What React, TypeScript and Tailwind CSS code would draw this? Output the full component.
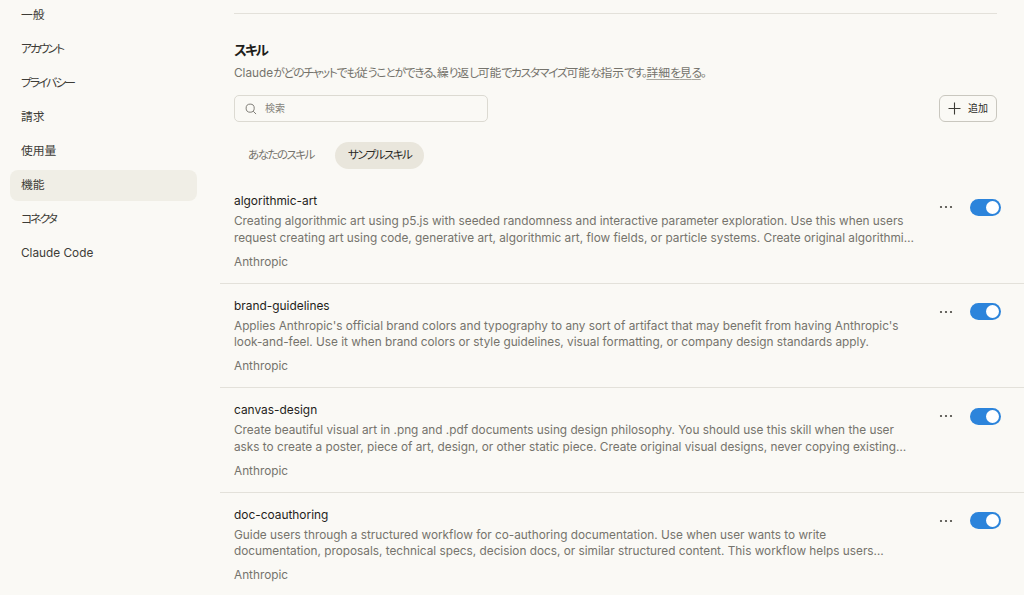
import React from "react";

const nav = ["一般", "アカウント", "プライバシー", "請求", "使用量", "機能", "コネクタ", "Claude Code"];

const skills = [
  {
    name: "algorithmic-art",
    lines: [
      "Creating algorithmic art using p5.js with seeded randomness and interactive parameter exploration. Use this when users",
      "request creating art using code, generative art, algorithmic art, flow fields, or particle systems. Create original algorithmi…",
    ],
  },
  {
    name: "brand-guidelines",
    lines: [
      "Applies Anthropic's official brand colors and typography to any sort of artifact that may benefit from having Anthropic's",
      "look-and-feel. Use it when brand colors or style guidelines, visual formatting, or company design standards apply.",
    ],
  },
  {
    name: "canvas-design",
    lines: [
      "Create beautiful visual art in .png and .pdf documents using design philosophy. You should use this skill when the user",
      "asks to create a poster, piece of art, design, or other static piece. Create original visual designs, never copying existing…",
    ],
  },
  {
    name: "doc-coauthoring",
    lines: [
      "Guide users through a structured workflow for co-authoring documentation. Use when user wants to write",
      "documentation, proposals, technical specs, decision docs, or similar structured content. This workflow helps users…",
    ],
  },
];

const font = "font-['Inter','Noto_Sans_CJK_JP',sans-serif] [font-feature-settings:'palt']";

// The reference font has narrow kana next to full-width kanji, so kana runs are tightened.
function K({ t, track = "tracking-[-0.13em]" }: { t: string; track?: string }) {
  return (
    <>
      {t.split(/([\u3040-\u30ff、。]+)/).map((part, i) =>
        i % 2 === 1 ? (
          <span key={i} className={track}>
            {part}
          </span>
        ) : (
          part
        ),
      )}
    </>
  );
}

function Row({ s, last }: { s: (typeof skills)[number]; last: boolean }) {
  return (
    <div className={`flex h-[104.5px] shrink-0 pl-[14px] pr-[23px] pt-[13px] ${last ? "" : "border-b border-[#e3e1da]"}`}>
      <div className="w-[680px] shrink-0">
        <div className="h-[18px] text-[11.9px] leading-[18px] text-[#1f1e1b]">{s.name}</div>
        <div className="mt-[3px] whitespace-nowrap text-[11.8px] leading-[16.5px] text-[#75736c]">
          {s.lines.map((l) => (
            <div key={l}>{l}</div>
          ))}
        </div>
        <div className="mt-[6.5px] text-[11.8px] leading-[18px] text-[#75736c]">Anthropic</div>
      </div>
      <div className="ml-auto mt-[3px] flex h-[24px] items-center">
        <svg width="14" height="4" viewBox="0 0 14 4" className="mr-[17px]">
          <circle cx="2" cy="2" r="1.1" fill="#45433e" />
          <circle cx="7" cy="2" r="1.1" fill="#45433e" />
          <circle cx="12" cy="2" r="1.1" fill="#45433e" />
        </svg>
        <div className="flex h-[17px] w-[31px] items-center justify-end rounded-full bg-[#2c84db] pr-[2px]">
          <div className="h-[13px] w-[13px] rounded-full bg-white" />
        </div>
      </div>
    </div>
  );
}

export default function App() {
  return (
    <div className={`flex h-[595px] w-[1024px] overflow-hidden bg-[#faf9f5] ${font}`}>
      <nav className="flex w-[220px] shrink-0 flex-col gap-[3px] pl-[10px] pr-[23px] pt-0">
        {nav.map((n) => (
          <div
            key={n}
            className={`flex h-[31px] shrink-0 items-center rounded-lg pl-[11px] text-[11.8px] text-[#3d3c37] ${
              n === "機能" ? "bg-[#f0eee6]" : ""
            }`}
          >
            <span>
              <K t={n} track="tracking-[-0.17em]" />
            </span>
          </div>
        ))}
      </nav>
      <main className="flex min-w-0 flex-1 flex-col">
        <div className="ml-[14px] mr-[27px] mt-[13px] h-px shrink-0 bg-[#e3e1da]" />
        <div className="ml-[14px] mr-[27px] mt-[27px] flex flex-col">
          <h2 className="h-[18px] text-[13.5px] font-semibold leading-[18px] text-[#1f1e1b]">
            <K t="スキル" />
          </h2>
          <p className="mt-[5px] h-[18px] whitespace-nowrap text-[11.8px] leading-[18px] text-[#75736c]">
            <K t="Claudeがどのチャットでも従うことができる、繰り返し可能でカスタマイズ可能な指示です。" track="tracking-[-0.11em]" />
            <span className="underline decoration-[#a8a69e] underline-offset-2">
              <K t="詳細を見る" track="tracking-[-0.11em]" />
            </span>
            <K t="。" track="tracking-[-0.11em]" />
          </p>
          <div className="mt-[13px] flex items-start justify-between">
            <div className="flex h-[27px] w-[254px] items-center gap-[8px] rounded-[5px] border border-[#dcdad2] px-[10px] text-[10px] text-[#85837b]">
              <svg width="12" height="12" viewBox="0 0 13 13" fill="none" stroke="#75736c" strokeWidth="1">
                <circle cx="5.6" cy="5.6" r="4.4" />
                <path d="M8.9 8.9 L12 12" />
              </svg>
              <span>検索</span>
            </div>
            <button className="flex h-[27px] w-[58px] items-center justify-center gap-[7px] rounded-[6px] border border-[#c9c7bf] text-[10px] text-[#2b2a27]">
              <svg width="13" height="13" viewBox="0 0 13 13" fill="none" stroke="#3d3c37" strokeWidth="1.1">
                <path d="M6.5 0.5 V12.5 M0.5 6.5 H12.5" />
              </svg>
              追加
            </button>
          </div>
          <div className="mt-[20px] flex h-[27px] items-center gap-[7px] text-[11.5px]">
            <div className="px-[14px] text-[#75736c]">
              <K t="あなたのスキル" />
            </div>
            <div className="flex h-[27px] items-center rounded-full bg-[#e9e6dc] px-[13px] text-[#2b2a27]">
              <K t="サンプルスキル" />
            </div>
          </div>
        </div>
        <div className="mt-[10px] flex flex-col">
          {skills.map((s, i) => (
            <Row key={s.name} s={s} last={i === skills.length - 1} />
          ))}
        </div>
      </main>
    </div>
  );
}
